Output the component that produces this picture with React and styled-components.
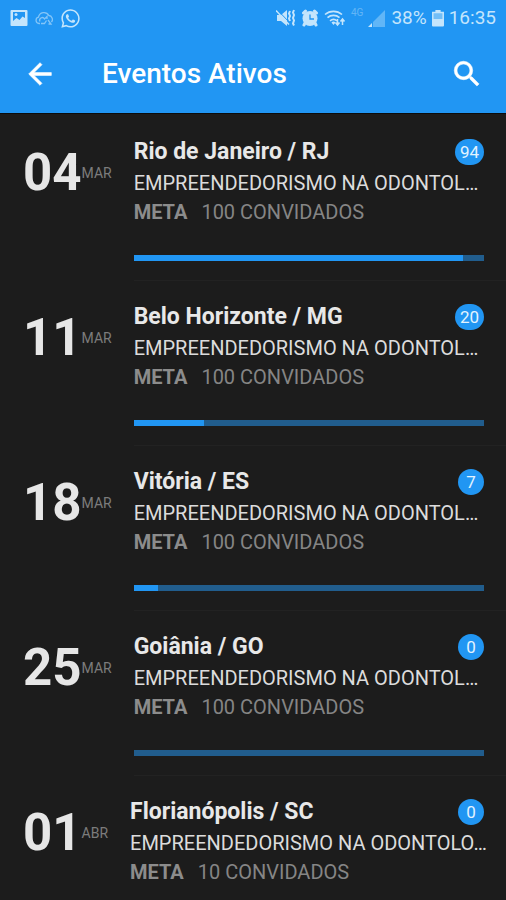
// App.jsx

import React from 'react';
import styled, { createGlobalStyle } from 'styled-components';
import { MdArrowBack, MdSearch } from 'react-icons/md';
import { FaWhatsapp } from 'react-icons/fa';

const events = [
  { id: 1, day: '04', month: 'MAR', city: 'Rio de Janeiro / RJ', subject: 'EMPREENDEDORISMO NA ODONTOL…', guests: 94, goal: 100 },
  { id: 2, day: '11', month: 'MAR', city: 'Belo Horizonte / MG', subject: 'EMPREENDEDORISMO NA ODONTOL…', guests: 20, goal: 100 },
  { id: 3, day: '18', month: 'MAR', city: 'Vitória / ES', subject: 'EMPREENDEDORISMO NA ODONTOL…', guests: 7, goal: 100 },
  { id: 4, day: '25', month: 'MAR', city: 'Goiânia / GO', subject: 'EMPREENDEDORISMO NA ODONTOL…', guests: 0, goal: 100 },
  { id: 5, day: '01', month: 'ABR', city: 'Florianópolis / SC', subject: 'EMPREENDEDORISMO NA ODONTOLO…', guests: 0, goal: 10 },
];

const GlobalStyle = createGlobalStyle`
  * {
    box-sizing: border-box;
  }

  body {
    margin: 0;
    background-color: #1c1c1c;
    font-family: Roboto, 'Liberation Sans', sans-serif;
  }
`;

const Screen = styled.div`
  display: flex;
  flex-direction: column;
  height: 100vh;
  background-color: #1c1c1c;
`;

const Header = styled.header`
  flex-shrink: 0;
  padding-bottom: 1px;
  background-color: #2196f3;
  border-bottom: 1px solid #0c0c0c;
`;

const StatusBar = styled.div`
  display: flex;
  align-items: center;
  justify-content: space-between;
  height: 36px;
  padding: 0 10px;
  color: #c4e5fc;
`;

const StatusGroup = styled.div`
  display: flex;
  align-items: center;
  gap: ${props => props.$gap}px;

  svg {
    display: block;
  }
`;

const StatusText = styled.span`
  font-size: 19px;
  line-height: 24px;
`;

const AppBar = styled.div`
  display: flex;
  align-items: center;
  height: 76px;
  padding: 0 22px 0 23px;
`;

const IconButton = styled.button`
  display: flex;
  padding: 0;
  border: 0;
  background: none;
  color: #fff;
  font-size: 34px;
  cursor: pointer;

  path:not([fill='none']) {
    stroke: currentColor;
    stroke-width: 0.4px;
  }

  path[fill='none'] {
    stroke: none;
  }
`;

const Title = styled.h1`
  flex: 1;
  margin: 0 0 0 45px;
  color: #fff;
  font-size: 28px;
  font-weight: 500;
  line-height: 36px;
`;

const EventList = styled.ul`
  flex: 1;
  min-height: 0;
  margin: 0;
  padding: 2px 0 0;
  list-style: none;
  overflow-y: auto;
  scrollbar-width: none;
`;

const EventItem = styled.li`
  display: flex;
  gap: 22px;
  padding-left: 23px;
`;

const EventDate = styled.div`
  display: flex;
  align-items: center;
  align-self: flex-start;
  flex-shrink: 0;
  padding-top: 27px;
`;

const Day = styled.span`
  color: #e6e6e6;
  font-size: 51px;
  font-weight: 700;
  line-height: 60px;
`;

const Month = styled.span`
  color: #7c7c7c;
  font-size: 14px;
  line-height: 20px;
`;

const EventDetails = styled.div`
  flex: 1;
  min-width: 0;
  padding: 20px 22px 19px 0;
  border-bottom: 1px solid #222;
`;

const DetailsTop = styled.div`
  display: flex;
  align-items: center;
  justify-content: space-between;
  height: 32px;
`;

const City = styled.h2`
  margin: 0;
  color: #e8e8e8;
  font-size: 23px;
  font-weight: 700;
  line-height: 32px;
`;

const Badge = styled.span`
  min-width: 26px;
  padding: 0 5px;
  border-radius: 13px;
  background-color: #2196f3;
  color: #e3f3ff;
  font-size: 17px;
  line-height: 26px;
  text-align: center;
`;

const Subject = styled.p`
  margin: 0;
  color: #dcdcdc;
  font-size: 20px;
  line-height: 30px;
  white-space: nowrap;
`;

const Goal = styled.p`
  display: flex;
  gap: 14px;
  margin: 0 0 29px;
  color: #858585;
  font-size: 20px;
  line-height: 28px;
`;

const GoalLabel = styled.strong`
  color: #8c8c8c;
  font-weight: 700;
`;

const Progress = styled.progress`
  display: block;
  width: 100%;
  height: 6px;
  border: 0;
  background-color: #215d8d;
  appearance: none;

  &::-webkit-progress-bar {
    background-color: #215d8d;
  }

  &::-webkit-progress-value {
    background-color: #2196f3;
  }

  &::-moz-progress-bar {
    background-color: #2196f3;
  }
`;

const PictureIcon = () => (
  <svg width="18" height="18" viewBox="0 0 18 18" fill="currentColor" aria-hidden="true">
    <path fillRule="evenodd" d="M1.5 1h15a1 1 0 0 1 1 1v14a1 1 0 0 1-1 1h-15a1 1 0 0 1-1-1V2a1 1 0 0 1 1-1zM3 3v9l3.500-3 3 2 3-3.500L15 9V3z" />
    <circle cx="6" cy="5.500" r="1.500" />
  </svg>
);

const CloudIcon = () => (
  <svg width="18" height="16" viewBox="0 0 18 16" fill="none" stroke="currentColor" strokeWidth="1.300" opacity="0.6" aria-hidden="true">
    <path d="M5 13.500H4a3.200 3.200 0 0 1-.5-6.300A5.500 5.500 0 0 1 13.800 5.500a4 4 0 0 1 2.700 6.500" />
    <path d="M5 11.500a2.500 2.500 0 0 1 4.500-2.500L12 6.500V9M13 10l3 4h-2.500M6 13.500h3.500l2-3" />
  </svg>
);

const MuteIcon = () => (
  <svg width="20" height="18" viewBox="0 0 20 18" aria-hidden="true">
    <path fill="currentColor" d="M1 6h4l6-5v16l-6-5H1z" />
    <path stroke="#2196f3" strokeWidth="1" d="M1.500 1l13 13.500" />
    <path stroke="currentColor" strokeWidth="1.500" d="M0 1.500l13 14" />
    <path fill="none" stroke="currentColor" strokeWidth="2" d="M14 2l-1 2.500 1 2.500-1 2.500 1 2.500M18 1l-1 2.500 1 2.500-1 3 1 2.500-1 3 1 2" />
  </svg>
);

const AlarmIcon = () => (
  <svg width="18" height="18" viewBox="0 0 18 18" aria-hidden="true">
    <path stroke="currentColor" strokeWidth="3" strokeLinecap="round" d="M2.500 4l2-2M15.500 4l-2-2M4 14l-1 2M14 14l1 2" />
    <circle cx="9" cy="9.500" r="7.500" fill="currentColor" />
    <path fill="none" stroke="#2196f3" strokeWidth="1.300" d="M9 5.500v4.500h4" />
  </svg>
);

const WifiIcon = () => (
  <svg width="22" height="18" viewBox="0 0 22 18" fill="none" stroke="currentColor" aria-hidden="true">
    <path strokeWidth="1.600" d="M1 5.500a13 13 0 0 1 17 0M3.500 8.700a9 9 0 0 1 12 0M6 11.800a5.500 5.500 0 0 1 7 0" />
    <path fill="currentColor" stroke="none" d="M7.500 13.500a3 3 0 0 1 4 0l-2 2.500z" />
    <path strokeWidth="1.500" d="M13.500 10v5.500M11.500 13.500l2 2.500 2-2.500M18.500 16v-5.500M16.500 12.500l2-2.500 2 2.500" />
  </svg>
);

const NetworkLabel = styled.span`
  align-self: flex-start;
  opacity: 0.4;
  font-size: 10px;
  line-height: 14px;
`;

const SignalIcon = () => (
  <svg width="18" height="19" viewBox="0 0 18 19" fill="currentColor" aria-hidden="true">
    <path opacity="0.4" d="M17 1v17H5V13z" />
    <path d="M4 14v4H0z" />
  </svg>
);

const BatteryIcon = () => (
  <svg width="12" height="18" viewBox="0 0 12 18" fill="currentColor" aria-hidden="true">
    <path opacity="0.5" d="M3.500 1h5v2H11a1 1 0 0 1 1 1v7H0V4a1 1 0 0 1 1-1h2.500z" />
    <path d="M0 10h12v6.500a1 1 0 0 1-1 1H1a1 1 0 0 1-1-1zM3.500 1h5v2h-5z" />
    <path fill="none" stroke="currentColor" strokeWidth="1.500" d="M.8 10V3.500h10.400V10" />
  </svg>
);

const EventRow = ({ event }) => (
  <EventItem>
    <EventDate>
      <Day>{event.day}</Day>
      <Month>{event.month}</Month>
    </EventDate>
    <EventDetails>
      <DetailsTop>
        <City>{event.city}</City>
        <Badge>{event.guests}</Badge>
      </DetailsTop>
      <Subject>{event.subject}</Subject>
      <Goal>
        <GoalLabel>META</GoalLabel>
        <span>{event.goal} CONVIDADOS</span>
      </Goal>
      <Progress value={event.guests} max={event.goal} aria-label={`Convidados em ${event.city}`} />
    </EventDetails>
  </EventItem>
);

const App = () => {
  return (
    <Screen>
      <GlobalStyle />
      <Header>
        <StatusBar>
          <StatusGroup $gap={7}>
            <PictureIcon />
            <CloudIcon />
            <FaWhatsapp size={21} />
          </StatusGroup>
          <StatusGroup $gap={5}>
            <MuteIcon />
            <AlarmIcon />
            <WifiIcon />
            <NetworkLabel>4G</NetworkLabel>
            <SignalIcon />
            <StatusText>38%</StatusText>
            <BatteryIcon />
            <StatusText>16:35</StatusText>
          </StatusGroup>
        </StatusBar>
        <AppBar>
          <IconButton type="button" aria-label="Voltar">
            <MdArrowBack />
          </IconButton>
          <Title>Eventos Ativos</Title>
          <IconButton type="button" aria-label="Buscar">
            <MdSearch />
          </IconButton>
        </AppBar>
      </Header>
      <EventList>
        {events.map(event => (
          <EventRow key={event.id} event={event} />
        ))}
      </EventList>
    </Screen>
  );
};

export default App;
